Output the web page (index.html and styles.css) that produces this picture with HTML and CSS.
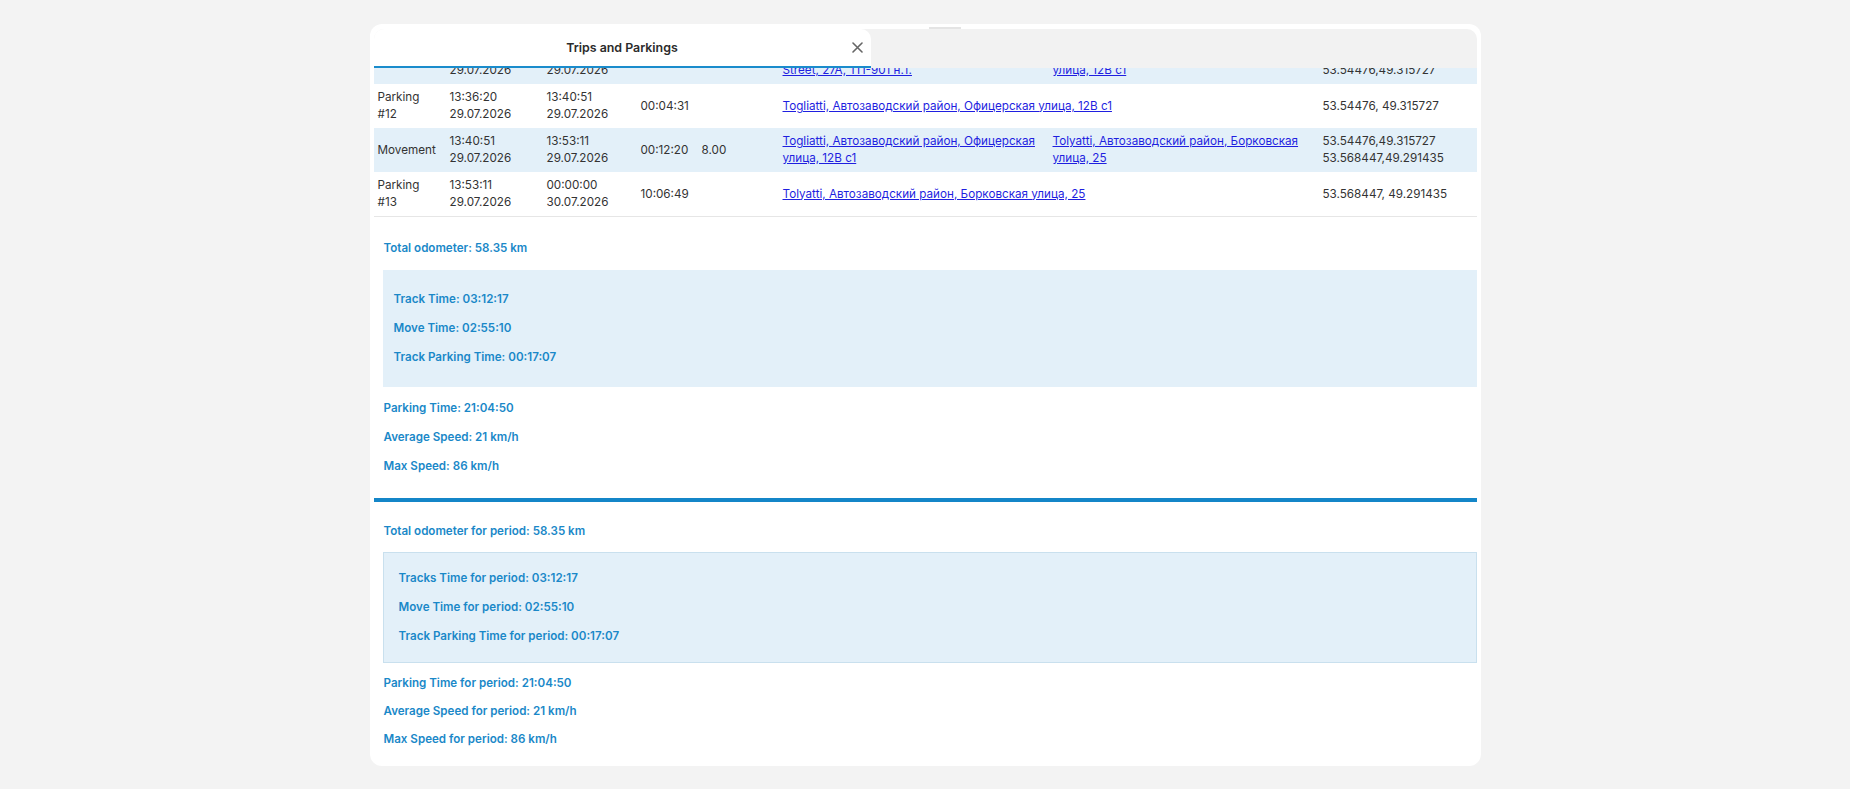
FILE: index.html
```html
<!DOCTYPE html>
<html lang="en">

<head>
    <meta charset="UTF-8">
    <meta name="viewport" content="width=device-width, initial-scale=1.0">
    <title>Trips and Parkings</title>

    <link rel="stylesheet" href="styles.css">
</head>

<body>
    <div class="page">
        <div class="card">
            <span class="grip"></span>

            <div class="head">
                <div class="tab">
                    <span></span>
                    <span class="tab-title">Trips and Parkings</span>
                    <button class="close" title="Close">
                        <svg width="11" height="11" viewBox="0 0 11 11">
                            <path d="M1 1 L10 10 M10 1 L1 10" stroke="#666" stroke-width="1.6" stroke-linecap="round" />
                        </svg>
                    </button>
                </div>
            </div>

            <div class="table-clip">
                <table class="trips">
                    <colgroup>
                        <col class="c-type">
                        <col class="c-start">
                        <col class="c-end">
                        <col class="c-dur">
                        <col class="c-dist">
                        <col class="c-addr">
                        <col class="c-addr">
                        <col class="c-coord">
                    </colgroup>
                    <tr class="move">
                        <td>Movement</td>
                        <td>13:21:07<br>29.07.2026</td>
                        <td>13:36:20<br>29.07.2026</td>
                        <td>00:15:13</td>
                        <td>9.40</td>
                        <td><a href="#">Togliatti, Автозаводский район, Yubileynaya Street, 27A, ТП-901 н.т.</a></td>
                        <td><a href="#">Togliatti, Автозаводский район, Офицерская улица, 12В с1</a></td>
                        <td>53.512034,49.270118<br>53.54476,49.315727</td>
                    </tr>
                    <tr>
                        <td>Parking<br>#12</td>
                        <td>13:36:20<br>29.07.2026</td>
                        <td>13:40:51<br>29.07.2026</td>
                        <td>00:04:31</td>
                        <td></td>
                        <td colspan="2"><a href="#">Togliatti, Автозаводский район, Офицерская улица, 12В с1</a></td>
                        <td>53.54476, 49.315727</td>
                    </tr>
                    <tr class="move">
                        <td>Movement</td>
                        <td>13:40:51<br>29.07.2026</td>
                        <td>13:53:11<br>29.07.2026</td>
                        <td>00:12:20</td>
                        <td>8.00</td>
                        <td><a href="#">Togliatti, Автозаводский район, Офицерская улица, 12В с1</a></td>
                        <td><a href="#">Tolyatti, Автозаводский район, Борковская улица, 25</a></td>
                        <td>53.54476,49.315727<br>53.568447,49.291435</td>
                    </tr>
                    <tr class="last">
                        <td>Parking<br>#13</td>
                        <td>13:53:11<br>29.07.2026</td>
                        <td>00:00:00<br>30.07.2026</td>
                        <td>10:06:49</td>
                        <td></td>
                        <td colspan="2"><a href="#">Tolyatti, Автозаводский район, Борковская улица, 25</a></td>
                        <td>53.568447, 49.291435</td>
                    </tr>
                </table>
            </div>

            <div class="summary">
                <p>Total odometer: 58.35 km</p>
                <div class="box">
                    <p>Track Time: 03:12:17</p>
                    <p>Move Time: 02:55:10</p>
                    <p>Track Parking Time: 00:17:07</p>
                </div>
                <p>Parking Time: 21:04:50</p>
                <p>Average Speed: 21 km/h</p>
                <p>Max Speed: 86 km/h</p>
            </div>

            <div class="divider"></div>

            <div class="summary period">
                <p>Total odometer for period: 58.35 km</p>
                <div class="box box-period">
                    <p>Tracks Time for period: 03:12:17</p>
                    <p>Move Time for period: 02:55:10</p>
                    <p>Track Parking Time for period: 00:17:07</p>
                </div>
                <p>Parking Time for period: 21:04:50</p>
                <p>Average Speed for period: 21 km/h</p>
                <p>Max Speed for period: 86 km/h</p>
            </div>
        </div>
    </div>
</body>

</html>
```

FILE: styles.css
```css
body {
    margin: 0;
    background-color: #f3f3f3;
    font-family: Inter, "Noto Sans", sans-serif;
    font-size: 11.7px;
    color: #333;
}

.page {
    padding-top: 24px;
}

.card {
    position: relative;
    width: 1111px;
    height: 742px;
    box-sizing: border-box;
    margin: 0 auto;
    padding: 5px 4px;
    background-color: #fff;
    border-radius: 12px;
    overflow: hidden;
}

.grip {
    position: absolute;
    top: 3px;
    left: 559px;
    width: 32px;
    height: 2px;
    background-color: #e4e4e4;
}

.head {
    height: 39px;
    background-color: #f2f2f2;
    border-radius: 10px 10px 0 0;
}

.tab {
    display: grid;
    grid-template-columns: 1fr auto 1fr;
    align-items: center;
    width: 497px;
    height: 39px;
    box-sizing: border-box;
    background-color: #fff;
    border-bottom: 2px solid #1a8ccc;
    border-radius: 10px 10px 0 0;
}

.tab-title {
    font-size: 12.4px;
    font-weight: 600;
    color: #2b2b2b;
}

.close {
    justify-self: end;
    margin-right: 6px;
    padding: 0;
    width: 14px;
    height: 14px;
    border: none;
    background: none;
    cursor: pointer;
}

.table-clip {
    overflow: hidden;
}

.trips {
    width: 100%;
    margin-top: -28px;
    border-collapse: collapse;
    table-layout: fixed;
}

.c-type {
    width: 72px;
}

.c-start {
    width: 97px;
}

.c-end {
    width: 94px;
}

.c-dur {
    width: 61px;
}

.c-dist {
    width: 81px;
}

.c-addr {
    width: 270px;
}

.c-coord {
    width: 158px;
}

.trips td {
    height: 34px;
    padding: 5px 4px;
    line-height: 17px;
    vertical-align: middle;
}

.trips tr.move td {
    background-color: #e3f0f9;
}

.trips tr.last td {
    border-bottom: 1px solid #e6e6e6;
}

.trips a {
    color: #1f1fe0;
}

.summary {
    padding: 10px 0 10px 10px;
}

.summary p {
    margin: 14px 0;
    line-height: 15px;
    font-size: 11.6px;
    font-weight: 600;
    color: #1a88c8;
}

.summary.period {
    padding-top: 9px;
}

.summary.period > p {
    margin: 13px 0;
}

.box {
    margin-left: -1px;
    padding: 8px 11px;
    background-color: #e3f0f9;
}

.box-period {
    padding: 4px 15px;
    border: 1px solid #c9e0ee;
}

.divider {
    height: 4px;
    background-color: #1486c8;
}
```
